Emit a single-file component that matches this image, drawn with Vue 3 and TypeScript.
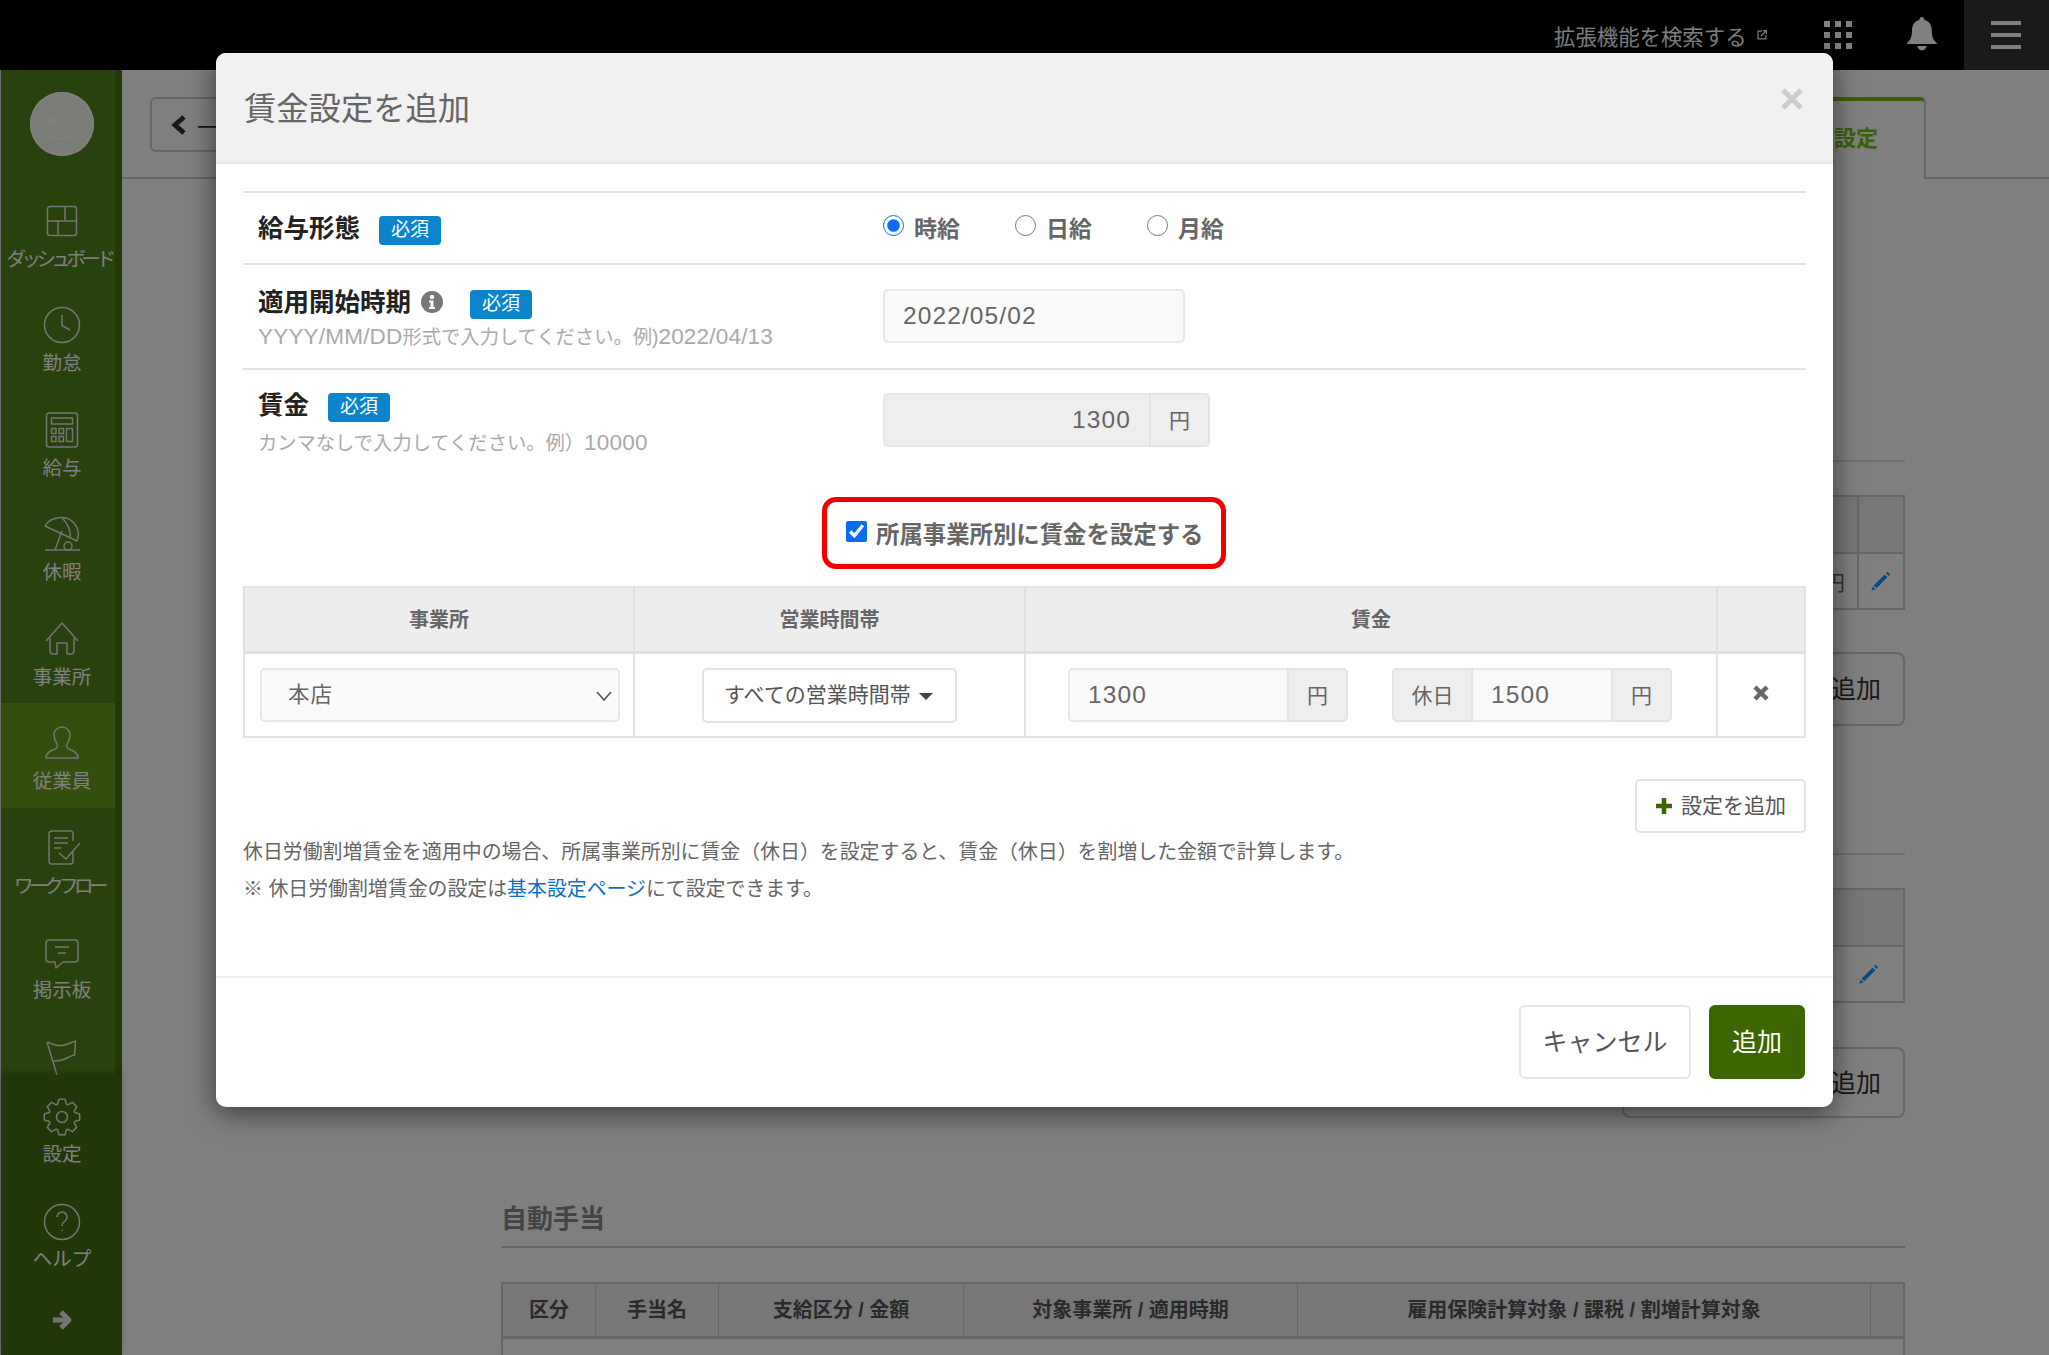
<script setup lang="ts">
import { ref } from "vue";

type NavItem = { label?: string; paths: string[]; tight?: boolean; active?: boolean };

// gear outline, 8 teeth round the centre of a 40x40 box
const gearPath = (): string => {
  const pts: string[] = [];
  for (let i = 0; i < 8; i++) {
    const a = (i * Math.PI) / 4 - Math.PI / 2;
    const rows: [number, number][] = [
      [13.5, -0.34],
      [18, -0.17],
      [18, 0.17],
      [13.5, 0.34],
    ];
    for (const [r, d] of rows) {
      pts.push(`${(20 + r * Math.cos(a + d)).toFixed(1)} ${(20 + r * Math.sin(a + d)).toFixed(1)}`);
    }
  }
  return `M${pts.join("L")}Z`;
};

const navItems: NavItem[] = [
  {
    label: "ダッシュボード",
    tight: true,
    paths: [
      "M8 5.5h24a2.5 2.5 0 0 1 2.5 2.5v24a2.5 2.5 0 0 1-2.5 2.5H8a2.5 2.5 0 0 1-2.5-2.5V8A2.5 2.5 0 0 1 8 5.5z",
      "M5.5 20h29",
      "M23 5.5V20",
      "M16 20v14.5",
    ],
  },
  {
    label: "勤怠",
    paths: ["M20 2.5a17.5 17.5 0 1 0 0 35a17.5 17.5 0 1 0 0-35z", "M20 10v10.5l8 4.5"],
  },
  {
    label: "給与",
    paths: [
      "M7 3h26a2.5 2.5 0 0 1 2.5 2.5v29a2.5 2.5 0 0 1-2.5 2.5H7a2.5 2.5 0 0 1-2.5-2.5v-29A2.5 2.5 0 0 1 7 3z",
      "M9.5 8h21v6h-21z",
      "M9.5 18.5h4.5v5h-4.5zM17 18.5h4.5v5H17zM9.5 26.5h4.5v5h-4.5zM17 26.5h4.5v5H17z",
      "M24.5 18.5h6v13h-6z",
    ],
  },
  {
    label: "休暇",
    paths: [
      "M3 12C8 3 24 0 32 9C37 15 37 22 35 27z",
      "M20 4c5 4 9 13 8 19",
      "M20 17L13 36",
      "M26 28a4 4 0 1 0 0 8a4 4 0 1 0 0-8z",
      "M3 36h35",
    ],
  },
  {
    label: "事業所",
    paths: ["M4 22L20 4l16 18", "M8 19v13a3 3 0 0 0 3 3h4V24h10v11h4a3 3 0 0 0 3-3V19"],
  },
  {
    label: "従業員",
    active: true,
    paths: [
      "M4 35c0-5 4-7 9-9c2-1 3-3 2-5c-2-3-3-6-3-9c0-4 3-8 8-8s8 4 8 8c0 3-1 6-3 9c-1 2 0 4 2 5c5 2 9 4 9 9z",
    ],
  },
  {
    label: "ワークフロー",
    tight: true,
    paths: [
      "M31 24v9a3 3 0 0 1-3 3H10a3 3 0 0 1-3-3V6a3 3 0 0 1 3-3h18a3 3 0 0 1 3 3v7",
      "M12 10h14",
      "M12 15h14",
      "M12 20h7",
      "M17 25l7 6L38 15",
    ],
  },
  {
    label: "掲示板",
    paths: [
      "M7 8h26a3 3 0 0 1 3 3v16a3 3 0 0 1-3 3H21l-7 6l-1-6H7a3 3 0 0 1-3-3V11a3 3 0 0 1 3-3z",
      "M13 15h14",
      "M16 21h8",
    ],
  },
  {
    // cut off by the fixed footer, only the icon shows
    paths: ["M5 5L15 38", "M5.500 5c8 4 14 5 20 2c3-1 5-2 8-3l-1 14c-5 1-8 4-13 5c-3 1-5 1-8 1"],
  },
];

const footItems: NavItem[] = [
  {
    label: "設定",
    paths: [gearPath(), "M20 14.5a5.5 5.5 0 1 0 0 11a5.5 5.5 0 1 0 0-11z"],
  },
  {
    label: "ヘルプ",
    paths: [
      "M20 2.5a17.5 17.5 0 1 0 0 35a17.5 17.5 0 1 0 0-35z",
      "M15 15a5 5 0 1 1 8 4c-2 1.5-3 2.5-3 5",
      "M20 28v1",
    ],
  },
];

const pencil = "M4 17L16 5l3 3L7 20zM3 18l-1.500 4.500l4.500-1.500zM17.500 3.500L19 2l3 3l-1.500 1.500z";

const payType = ref("hourly");
const startDate = ref("2022/05/02");
const wage = ref("1300");
const byOffice = ref(true);
const office = ref("本店");
const officeWage = ref("1300");
const holidayWage = ref("1500");
</script>

<template>
  <div class="page">
    <header class="topbar">
      <span class="ext-link">拡張機能を検索する</span>
      <svg class="ext-icon" width="12" height="12" viewBox="0 0 12 12" fill="none" stroke="currentColor" stroke-width="1.2">
        <path d="M6 2H2v8h8V6" />
        <path d="M5 7l5-5M7 1.5h3.5V5" />
      </svg>
      <div class="apps">
        <i v-for="n in 9" :key="n"></i>
      </div>
      <svg class="bell" width="30" height="34" viewBox="0 0 30 34" fill="currentColor">
        <path d="M15 0a2.5 2.5 0 0 1 2.5 3C23 4 25 9 25 14c0 6 1.5 9 5 12v1H0v-1c3.500-3 5-6 5-12c0-5 2-10 7.500-11A2.500 2.500 0 0 1 15 0z" />
        <path d="M10.500 29h9a4.500 4.500 0 0 1-9 0z" />
      </svg>
      <div class="burger"><i></i><i></i><i></i></div>
    </header>

    <div class="shell">
      <aside class="sidebar">
        <div class="avatar">
          <svg width="64" height="64" viewBox="0 0 64 64" fill="none" stroke="currentColor" stroke-width="2">
            <circle cx="23" cy="29" r="4" fill="currentColor" stroke="none" />
            <path d="M37 30c2-3 6-3 9-1" />
            <path d="M18 42c8 7 20 7 28 0" />
          </svg>
        </div>
        <nav class="nav-main">
          <a v-for="(item, i) in navItems" :key="i" class="nav-item" :class="{ active: item.active }">
            <svg width="40" height="40" viewBox="0 0 40 40" fill="none" stroke="currentColor" stroke-width="1.5" stroke-linejoin="round">
              <path v-for="d in item.paths" :key="d" :d="d" />
            </svg>
            <span v-if="item.label" :class="{ tight: item.tight }">{{ item.label }}</span>
          </a>
        </nav>
        <div class="nav-foot">
          <a v-for="item in footItems" :key="item.label" class="nav-item">
            <svg width="40" height="40" viewBox="0 0 40 40" fill="none" stroke="currentColor" stroke-width="1.5" stroke-linejoin="round">
              <path v-for="d in item.paths" :key="d" :d="d" />
            </svg>
            <span>{{ item.label }}</span>
          </a>
          <svg class="collapse" width="22" height="22" viewBox="0 0 22 22" fill="none" stroke="currentColor" stroke-width="5" stroke-linejoin="round">
            <path d="M2 11h15M10 3l8 8l-8 8" />
          </svg>
        </div>
      </aside>

      <main class="content">
        <div class="content-head">
          <button class="back">
            <svg width="16" height="22" viewBox="0 0 16 22" fill="none" stroke="currentColor" stroke-width="5">
              <path d="M13 3L4 11l9 8" />
            </svg>
            <span>一</span>
          </button>
          <div class="tab">賃金設定</div>
        </div>

        <div class="sheet">
          <div class="rule first"></div>
          <div class="bg-table t1">
            <div class="bg-head"></div>
            <div class="bg-row">
              <span class="yen">円</span>
              <span class="edit">
                <svg width="22" height="22" viewBox="0 0 24 24" fill="currentColor"><path :d="pencil" /></svg>
              </span>
            </div>
          </div>
          <button class="bg-add b1">追加</button>
          <div class="rule second"></div>
          <div class="bg-table t2">
            <div class="bg-head"></div>
            <div class="bg-row">
              <span class="edit">
                <svg width="22" height="22" viewBox="0 0 24 24" fill="currentColor"><path :d="pencil" /></svg>
              </span>
            </div>
          </div>
          <button class="bg-add b2">追加</button>

          <h2 class="section-title">自動手当</h2>
          <div class="auto-head">
            <div class="a1">区分</div>
            <div class="a2">手当名</div>
            <div class="a3">支給区分 / 金額</div>
            <div class="a4">対象事業所 / 適用時期</div>
            <div class="a5">雇用保険計算対象 / 課税 / 割増計算対象</div>
            <div class="grow"></div>
          </div>
          <div class="auto-body"></div>
        </div>
      </main>
    </div>

    <div class="overlay"></div>

    <section class="modal">
      <div class="modal-head">
        <h1>賃金設定を追加</h1>
        <svg class="close" width="22" height="22" viewBox="0 0 22 22" stroke="currentColor" stroke-width="5">
          <path d="M2 2l18 18M20 2L2 20" />
        </svg>
      </div>

      <div class="modal-body">
        <div class="row row-pay">
          <div class="row-label">
            <div class="label-line"><strong>給与形態</strong><span class="req">必須</span></div>
          </div>
          <div class="radios">
            <label><input v-model="payType" type="radio" value="hourly" />時給</label>
            <label><input v-model="payType" type="radio" value="daily" />日給</label>
            <label><input v-model="payType" type="radio" value="monthly" />月給</label>
          </div>
        </div>

        <div class="row row-date">
          <div class="row-label">
            <div class="label-line">
              <strong>適用開始時期</strong>
              <svg class="info" width="22" height="22" viewBox="0 0 22 22">
                <circle cx="11" cy="11" r="11" fill="#777" />
                <circle cx="11" cy="6" r="2.200" fill="#fff" />
                <path d="M8 9.500h4.500V16H14v2H8v-2h1.500v-4.500H8z" fill="#fff" />
              </svg>
              <span class="req gap">必須</span>
            </div>
            <p class="hint"><span class="num">YYYY/MM/DD</span>形式で入力してください。例)<span class="num">2022/04/13</span></p>
          </div>
          <input v-model="startDate" class="field date" />
        </div>

        <div class="row row-wage">
          <div class="row-label">
            <div class="label-line"><strong>賃金</strong><span class="req">必須</span></div>
            <p class="hint">カンマなしで入力してください。例）<span class="num">10000</span></p>
          </div>
          <div class="group wage">
            <input v-model="wage" class="field right" disabled />
            <span class="addon">円</span>
          </div>
        </div>

        <div class="by-office">
          <label class="highlight">
            <input v-model="byOffice" type="checkbox" />
            所属事業所別に賃金を設定する
          </label>
        </div>

        <table class="office-table">
          <thead>
            <tr>
              <th class="c1">事業所</th>
              <th class="c2">営業時間帯</th>
              <th>賃金</th>
              <th class="c4"></th>
            </tr>
          </thead>
          <tbody>
            <tr>
              <td>
                <div class="select-wrap">
                  <select v-model="office" class="field">
                    <option>本店</option>
                  </select>
                  <svg width="16" height="10" viewBox="0 0 16 10" fill="none" stroke="#555" stroke-width="1.600">
                    <path d="M1 1l7 8l7-8" />
                  </svg>
                </div>
              </td>
              <td class="center">
                <button class="hours">すべての営業時間帯<i class="caret"></i></button>
              </td>
              <td>
                <div class="wage-cell">
                  <div class="group">
                    <input v-model="officeWage" class="field" />
                    <span class="addon">円</span>
                  </div>
                  <div class="group">
                    <span class="addon left">休日</span>
                    <input v-model="holidayWage" class="field" />
                    <span class="addon">円</span>
                  </div>
                </div>
              </td>
              <td class="center">
                <svg width="16" height="16" viewBox="0 0 16 16" stroke="#666" stroke-width="4.500">
                  <path d="M2 2l12 12M14 2L2 14" />
                </svg>
              </td>
            </tr>
          </tbody>
        </table>

        <div class="add-line">
          <button class="add-setting">
            <svg width="16" height="16" viewBox="0 0 16 16" stroke="#3c6600" stroke-width="4.500">
              <path d="M8 0v16M0 8h16" />
            </svg>
            設定を追加
          </button>
        </div>

        <p class="note note-one">休日労働割増賃金を適用中の場合、所属事業所別に賃金（休日）を設定すると、賃金（休日）を割増した金額で計算します。</p>
        <p class="note">※ 休日労働割増賃金の設定は<a class="link">基本設定ページ</a>にて設定できます。</p>
      </div>

      <div class="modal-foot">
        <button class="btn">キャンセル</button>
        <button class="btn primary">追加</button>
      </div>
    </section>
  </div>
</template>

<style>
body {
  margin: 0;
  font-family: "Liberation Sans", "Noto Sans CJK JP", sans-serif;
}
</style>

<style scoped>
.page {
  position: relative;
  width: 2049px;
  height: 1355px;
  overflow: hidden;
  background: #fff;
}

.topbar {
  display: flex;
  align-items: center;
  height: 70px;
  background: #000;
  color: #fff;
  padding-left: 1554px;
  box-sizing: border-box;
}
.ext-link {
  font-size: 21.400px;
  white-space: nowrap;
}
.ext-icon {
  margin: 0 0 0 9px;
}
.apps {
  display: grid;
  grid-template-columns: repeat(3, 6px);
  gap: 5px;
  margin-left: 57px;
}
.apps i {
  height: 6px;
  background: #fff;
}
.bell {
  margin-left: 55px;
  margin-top: -2px;
}
.burger {
  margin-left: 27px;
  width: 85px;
  height: 70px;
  background: #343434;
  display: flex;
  flex-direction: column;
  justify-content: center;
  gap: 8px;
  padding: 0 28px 0 27px;
  box-sizing: border-box;
}
.burger i {
  height: 4px;
  background: #fff;
}

.shell {
  display: flex;
  height: 1285px;
}

.sidebar {
  width: 122px;
  flex: none;
  display: flex;
  flex-direction: column;
  box-sizing: border-box;
  background: #50841a;
  border-left: 1px solid #ddd;
  border-right: 7px solid #446f14;
  color: #fff;
}
.avatar {
  flex: none;
  width: 64px;
  height: 64px;
  margin: 22px 0 24.500px 29px;
  border-radius: 50%;
  background: #f4f8ee;
  box-shadow: inset 0 0 0 2px #fff;
  color: #fff;
}
.nav-main {
  flex: 1;
  min-height: 0;
  overflow: hidden;
}
.nav-foot {
  flex: none;
  height: 280px;
  margin-right: -7px;
  background: #40700e;
  box-shadow: 0 -3px 6px rgba(0, 0, 0, 0.18);
  display: flex;
  flex-direction: column;
  align-items: flex-start;
  position: relative;
}
.nav-item {
  display: flex;
  flex-direction: column;
  align-items: center;
  width: 114px;
  height: 104.500px;
  padding: 20px 0 0 8px;
  box-sizing: border-box;
  color: #fff;
}
.nav-foot .nav-item {
  height: 105px;
  padding-top: 22px;
}
.nav-foot .nav-item span {
  margin-top: 0;
}
.nav-item svg {
  color: #e8e8e8;
  flex: none;
}
.nav-item span {
  margin-top: 1px;
  font-size: 19.500px;
  line-height: 34px;
  white-space: nowrap;
}
.nav-item .tight {
  letter-spacing: -4.500px;
  margin-right: 6px;
}
.nav-item.active {
  background: #649e1e;
}
.collapse {
  margin: 24px 0 0 50px;
  color: #e8e8e8;
}

.content {
  flex: 1;
  min-width: 0;
}
.content-head {
  display: flex;
  justify-content: space-between;
  align-items: flex-start;
  height: 109px;
  box-sizing: border-box;
  border-bottom: 2px solid #ccc;
  padding: 27px 123px 0 28px;
}
.back {
  display: flex;
  align-items: center;
  gap: 10px;
  height: 55px;
  padding: 0 16px 0 19px;
  background: #fff;
  border: 2px solid #ccc;
  border-radius: 6px;
  font: inherit;
  font-size: 22px;
  color: #333;
}
.tab {
  width: 320px;
  height: 82px;
  box-sizing: border-box;
  margin-bottom: -2px;
  background: #fff;
  border-top: 4px solid #74c400;
  border-right: 2px solid #ccc;
  border-radius: 0 6px 0 0;
  text-align: right;
  padding: 21px 46px 0 0;
  font-size: 22px;
  font-weight: 700;
  line-height: 34px;
  color: #74c400;
}
.sheet {
  margin-left: 379px;
  width: 1404px;
}
.rule {
  border-top: 2px solid #ddd;
}
.rule.first {
  margin-top: 281px;
}
.bg-table {
  border: 2px solid #ccc;
  margin-left: auto;
  width: 1000px;
  box-sizing: border-box;
}
.t1 {
  margin-top: 33px;
  height: 115px;
}
.t2 {
  margin-top: 33px;
  height: 115px;
}
.bg-head {
  position: relative;
  background: #eee;
  border-bottom: 2px solid #ccc;
  height: 55px;
}
.t1 .bg-head::after {
  content: "";
  position: absolute;
  right: 44px;
  top: 0;
  bottom: 0;
  border-left: 2px solid #ccc;
}
.bg-row {
  display: flex;
  justify-content: flex-end;
  align-items: center;
  height: 54px;
}
.yen {
  font-size: 21px;
  color: #666;
  margin-right: 12px;
}
.edit {
  color: #1494ff;
  width: 44px;
  display: flex;
  justify-content: center;
  align-self: stretch;
  align-items: center;
  border-left: 2px solid #ccc;
}
.t2 .edit {
  border-left: 0;
  width: 68px;
}
.bg-add {
  display: block;
  margin: 42px 0 0 auto;
  width: 283px;
  height: 74px;
  background: #fff;
  border: 2px solid #ccc;
  border-radius: 8px;
  font: inherit;
  font-size: 25px;
  color: #333;
  text-align: right;
  padding: 0 22px 4px 0;
}
.bg-add.b2 {
  margin-top: 44px;
  height: 71px;
}
.rule.second {
  margin-top: 127px;
}
.section-title {
  margin: 82px 0 0;
  padding-bottom: 8px;
  border-bottom: 2px solid #ccc;
  font-size: 26px;
  line-height: 38px;
  font-weight: 700;
  color: #888;
}
.auto-head {
  display: flex;
  margin-top: 34px;
  height: 57px;
  box-sizing: border-box;
  background: #eee;
  border: 2px solid #ccc;
  border-bottom-width: 3px;
  font-size: 20px;
  font-weight: 700;
  color: #555;
}
.auto-head div {
  flex: none;
  display: flex;
  align-items: center;
  justify-content: center;
  box-sizing: border-box;
  padding-bottom: 4px;
  border-right: 1px solid #ccc;
}
.a1 {
  width: 93px;
}
.a2 {
  width: 123px;
}
.a3 {
  width: 245px;
}
.a4 {
  width: 334px;
}
.a5 {
  width: 573px;
}
.auto-head .grow {
  flex: 1;
  border-right: 0;
}
.auto-body {
  height: 40px;
  border: 2px solid #ccc;
  border-top: 0;
}

.overlay {
  position: absolute;
  inset: 0;
  background: rgba(0, 0, 0, 0.5);
}

.modal {
  position: absolute;
  left: 216px;
  top: 53px;
  width: 1617px;
  height: 1054px;
  display: flex;
  flex-direction: column;
  background: #fff;
  border-radius: 10px;
  box-shadow: 0 6px 28px rgba(0, 0, 0, 0.55);
  color: #666;
}
.modal-head {
  position: relative;
  flex: none;
  height: 111px;
  box-sizing: border-box;
  background: #f1f1f1;
  border-bottom: 2px solid #e8e8e8;
  border-radius: 10px 10px 0 0;
  padding: 32px 28px 0;
}
.modal-head h1 {
  margin: 0;
  font-size: 32.300px;
  line-height: 48px;
  font-weight: 400;
  color: #666;
}
.close {
  position: absolute;
  right: 30px;
  top: 35px;
  color: #ccc;
}
.modal-body {
  flex: 1;
  padding: 27px 27px 0;
}
.row {
  display: flex;
  box-sizing: border-box;
  border-top: 2px solid #e4e4e4;
}
.row-label {
  width: 640px;
  flex: none;
  padding-left: 15px;
  box-sizing: border-box;
}
.row-pay {
  height: 72px;
  align-items: center;
}
.row-date {
  height: 105px;
  padding-top: 24px;
}
.row-date .row-label {
  margin-top: -4px;
}
.row-wage {
  height: 129px;
  padding-top: 23px;
}
.row-wage .row-label {
  margin-top: -5px;
}
.label-line {
  display: flex;
  align-items: center;
  height: 34px;
}
.label-line strong {
  margin-bottom: 6px;
  font-size: 25.500px;
  font-weight: 700;
  color: #222;
  white-space: nowrap;
}
.req {
  margin: 4px 0 0 19px;
  width: 62px;
  height: 29px;
  border-radius: 4px;
  background: #0b84cc;
  color: #fff;
  font-size: 19px;
  line-height: 28px;
  text-align: center;
}
.req.gap {
  margin-left: 27px;
}
.info {
  margin-left: 10px;
}
.hint {
  margin: 1px 0 0;
  font-size: 19.300px;
  line-height: 34px;
  color: #aaa;
  white-space: nowrap;
}
.hint .num {
  font-size: 22.500px;
  letter-spacing: 0.2px;
}
.row-wage .hint {
  margin-top: 4px;
}
.radios {
  display: flex;
  margin-top: -2px;
}
.radios label {
  display: flex;
  align-items: center;
  font-size: 23px;
  font-weight: 700;
  color: #666;
  width: 132px;
}
.radios input {
  width: 21px;
  height: 21px;
  margin: -3px 10px 0 0;
  accent-color: #0a6cf5;
}

.field {
  height: 54px;
  box-sizing: border-box;
  border: 2px solid #e8e8e8;
  border-radius: 5px;
  background: #fafafa;
  font: inherit;
  font-size: 24.500px;
  letter-spacing: 1.100px;
  color: #666;
  padding: 0 18px;
  outline: none;
}
.date {
  width: 302px;
}
.group {
  display: flex;
  width: 280px;
}
.group .field {
  flex: 1;
  min-width: 0;
  border-radius: 5px 0 0 5px;
  border-right: 0;
}
.group .addon.left + .field {
  border-radius: 0;
  border-left: 0;
}
.addon {
  flex: none;
  width: 61px;
  height: 54px;
  box-sizing: border-box;
  border: 2px solid #e4e4e4;
  border-radius: 0 5px 5px 0;
  background: #eee;
  display: flex;
  align-items: center;
  justify-content: center;
  padding-bottom: 3px;
  font-size: 21px;
  color: #666;
}
.addon.left {
  width: 81px;
  border-radius: 5px 0 0 5px;
}
.wage {
  width: 327px;
}
.wage .field {
  background: #eee;
  text-align: right;
  -webkit-text-fill-color: #666;
  opacity: 1;
}
.by-office {
  display: flex;
  justify-content: center;
  margin-left: -1px;
}
.highlight {
  display: flex;
  align-items: center;
  width: 404px;
  height: 72px;
  box-sizing: border-box;
  border: 5px solid #f20000;
  border-radius: 14px;
  padding-left: 19px;
  font-size: 23.400px;
  font-weight: 700;
  color: #666;
  white-space: nowrap;
}
.highlight input {
  width: 21px;
  height: 21px;
  margin: -4px 9px 0 0;
  accent-color: #0a6cf5;
}

.office-table {
  width: 100%;
  margin-top: 17px;
  border-collapse: collapse;
  table-layout: fixed;
  border: 2px solid #e4e4e4;
}
.office-table th {
  height: 60px;
  background: #ededed;
  border-left: 2px solid #e0e0e0;
  border-bottom: 3px solid #e0e0e0;
  font-size: 20px;
  font-weight: 700;
  color: #666;
  padding: 0 0 3px;
}
.office-table td {
  height: 82px;
  border-left: 2px solid #e4e4e4;
  padding: 0;
}
.c1 {
  width: 388px;
}
.c2 {
  width: 389px;
}
.c4 {
  width: 86px;
}
.center {
  text-align: center;
}
.select-wrap {
  position: relative;
  width: 360px;
  margin-left: 15px;
}
.select-wrap select {
  width: 100%;
  appearance: none;
  padding-left: 26px;
  font-size: 21.500px;
}
.select-wrap svg {
  position: absolute;
  right: 8px;
  top: 23px;
}
.hours {
  display: inline-flex;
  align-items: center;
  height: 55px;
  width: 255px;
  box-sizing: border-box;
  padding: 0 0 4px 20px;
  background: #fff;
  border: 2px solid #e4e4e4;
  border-radius: 5px;
  font: inherit;
  font-size: 21px;
  color: #555;
}
.caret {
  margin-left: 8px;
  margin-top: 7px;
  border-top: 7px solid #444;
  border-left: 7px solid transparent;
  border-right: 7px solid transparent;
}
.wage-cell {
  display: flex;
  gap: 44px;
  padding-left: 42px;
}

.add-line {
  display: flex;
  justify-content: flex-end;
  margin-top: 41px;
}
.add-setting {
  display: flex;
  align-items: center;
  gap: 9px;
  width: 171px;
  height: 54px;
  box-sizing: border-box;
  padding: 0 0 4px 19px;
  background: #fff;
  border: 2px solid #e4e4e4;
  border-radius: 5px;
  font: inherit;
  font-size: 21px;
  color: #555;
  white-space: nowrap;
}
.add-setting svg {
  margin-top: 4px;
}
.note {
  margin: 0;
  font-size: 19.900px;
  line-height: 37px;
  color: #666;
  white-space: nowrap;
}
.note-one {
  margin-top: 1px;
}
.link {
  color: #0b6fcc;
}

.modal-foot {
  flex: none;
  height: 131px;
  box-sizing: border-box;
  border-top: 2px solid #f0f0f0;
  display: flex;
  justify-content: flex-end;
  gap: 18px;
  padding: 27px 28px 0 0;
}
.btn {
  width: 172px;
  height: 74px;
  box-sizing: border-box;
  background: #fff;
  border: 2px solid #e6e6e6;
  border-radius: 6px;
  padding: 0 0 4px;
  font: inherit;
  font-size: 25px;
  color: #555;
}
.btn.primary {
  width: 96px;
  background: #3c6600;
  border-color: #3c6600;
  color: #fff;
}
</style>
